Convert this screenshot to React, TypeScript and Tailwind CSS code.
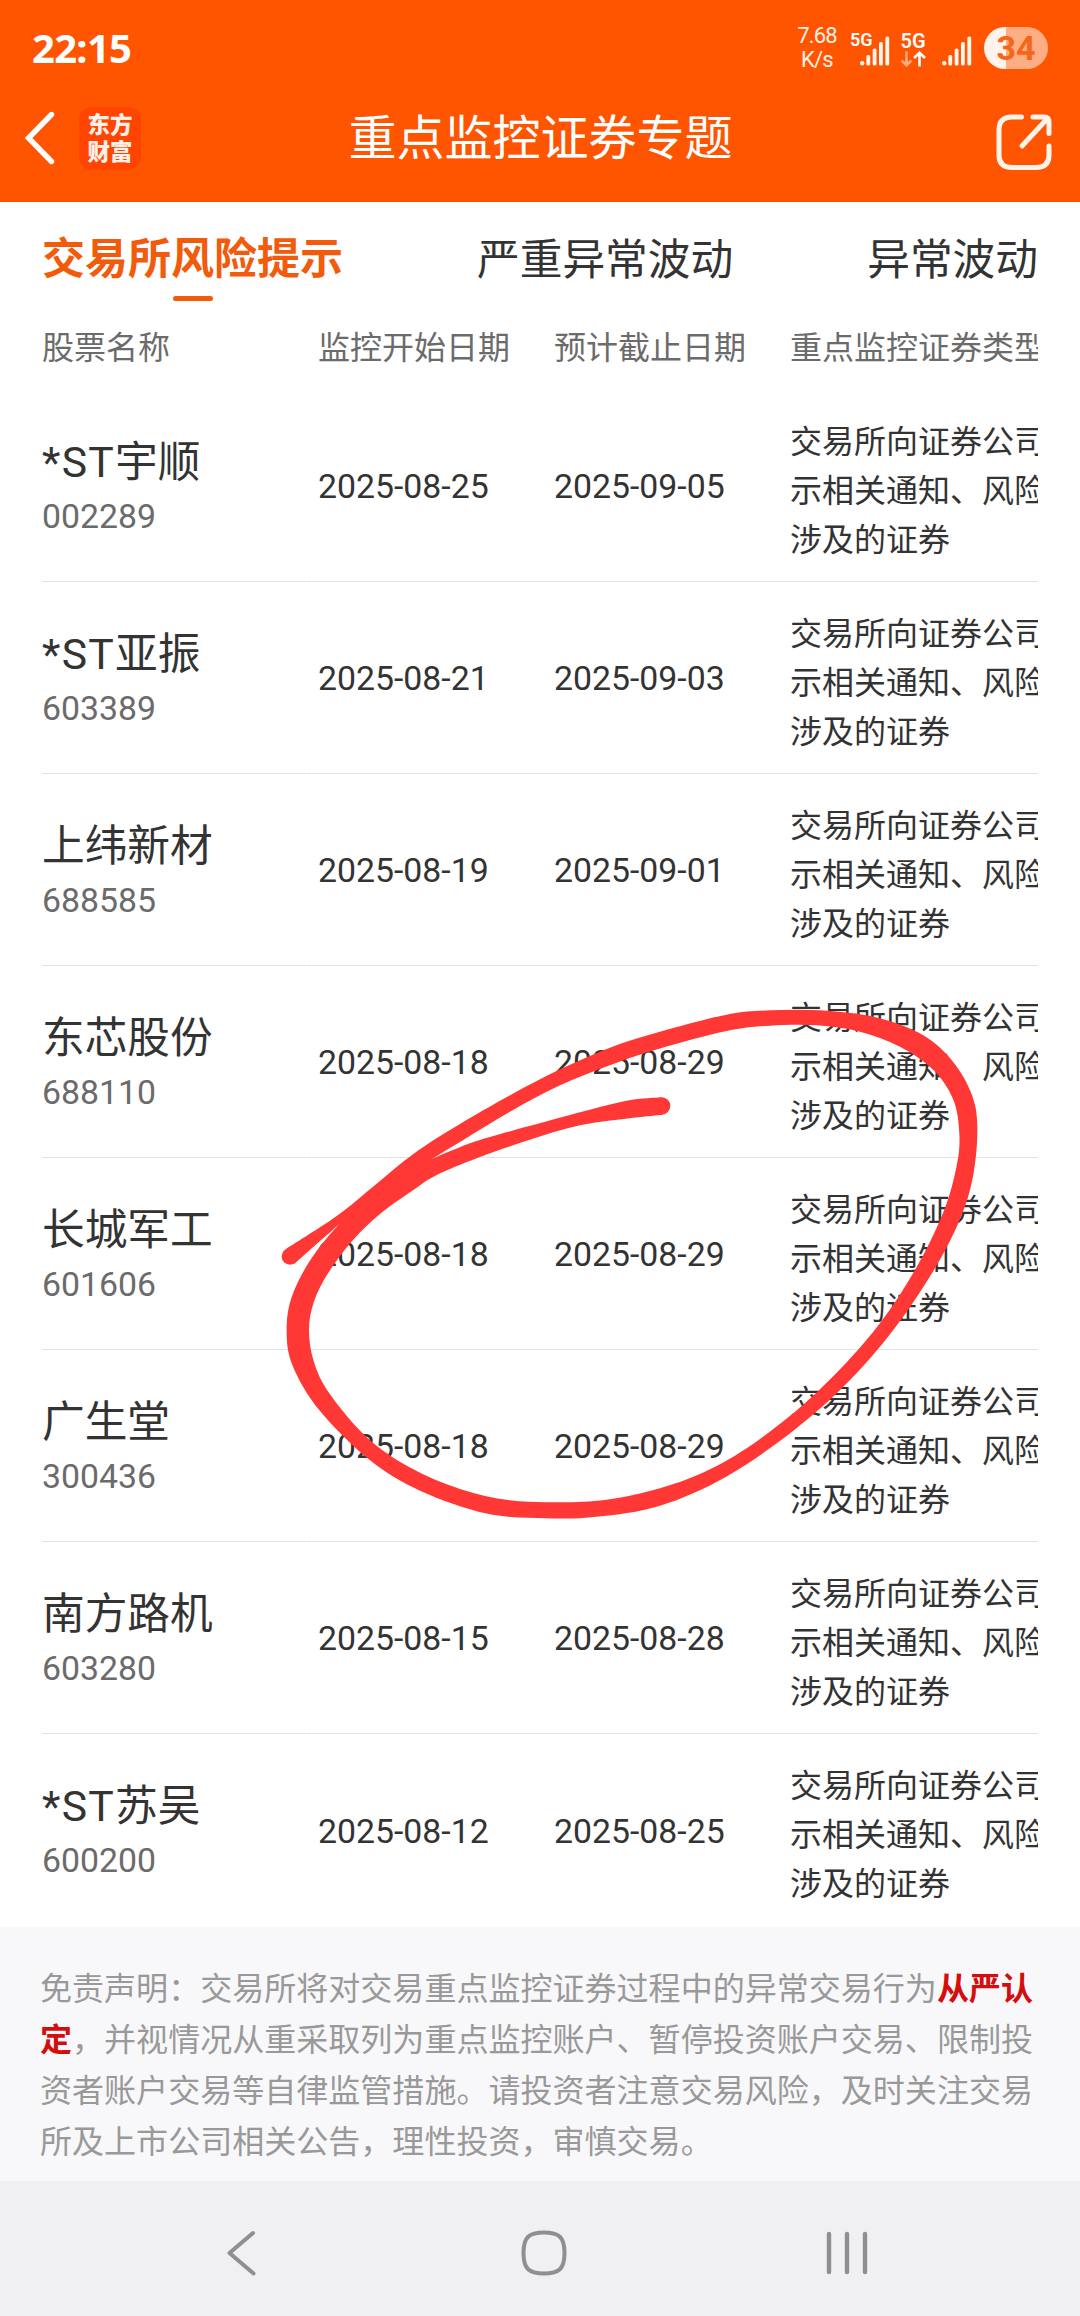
import React from "react";

const stocks = [
  { prefix: "*ST", name: "宇顺", code: "002289", start: "2025-08-25", end: "2025-09-05" },
  { prefix: "*ST", name: "亚振", code: "603389", start: "2025-08-21", end: "2025-09-03" },
  { prefix: "", name: "上纬新材", code: "688585", start: "2025-08-19", end: "2025-09-01" },
  { prefix: "", name: "东芯股份", code: "688110", start: "2025-08-18", end: "2025-08-29" },
  { prefix: "", name: "长城军工", code: "601606", start: "2025-08-18", end: "2025-08-29" },
  { prefix: "", name: "广生堂", code: "300436", start: "2025-08-18", end: "2025-08-29" },
  { prefix: "", name: "南方路机", code: "603280", start: "2025-08-15", end: "2025-08-28" },
  { prefix: "*ST", name: "苏吴", code: "600200", start: "2025-08-12", end: "2025-08-25" },
];

type Point = [number, number];

// the two edges of the hand-drawn loop, from the thick end to the thin tail
const outerEdge: Point[] = [
  [1205, 328], [1100, 338], [930, 378], [700, 437], [600, 468], [490, 513],
  [380, 575], [270, 653], [165, 765], [98, 880], [80, 980], [98, 1080],
  [180, 1207], [330, 1345], [480, 1430], [680, 1494], [860, 1507],
  [1010, 1503], [1200, 1472], [1400, 1390], [1600, 1262], [1760, 1130],
  [1900, 980], [2020, 815], [2100, 670], [2140, 545], [2152, 410],
  [2135, 320], [2080, 230], [1990, 155], [1850, 105], [1680, 85],
  [1530, 85], [1400, 97], [1200, 145], [1050, 190], [840, 278],
  [600, 403], [460, 487], [340, 578], [230, 661], [80, 752],
];

const innerEdge: Point[] = [
  [1208, 377], [1120, 386], [960, 407], [800, 450], [650, 499], [530, 546],
  [460, 588], [360, 655], [275, 732], [205, 820], [162, 900], [147, 980],
  [162, 1070], [210, 1160], [320, 1280], [450, 1365], [600, 1425],
  [750, 1457], [900, 1462], [1040, 1455], [1200, 1423], [1350, 1370],
  [1500, 1285], [1670, 1155], [1840, 985], [1960, 820], [2050, 650],
  [2090, 520], [2098, 430], [2080, 335], [2020, 252], [1920, 187],
  [1800, 145], [1670, 127], [1530, 128], [1400, 143], [1200, 192],
  [1060, 235], [900, 295], [750, 369], [610, 448], [490, 518],
  [390, 600], [265, 664], [200, 715], [103, 795],
];

function curve(points: Point[]) {
  let d = "";
  for (let i = 0; i < points.length - 1; i++) {
    const p0 = points[i - 1] || points[i];
    const p1 = points[i];
    const p2 = points[i + 1];
    const p3 = points[i + 2] || p2;
    d += `C${p1[0] + (p2[0] - p0[0]) / 6} ${p1[1] + (p2[1] - p0[1]) / 6} `;
    d += `${p2[0] - (p3[0] - p1[0]) / 6} ${p2[1] - (p3[1] - p1[1]) / 6} `;
    d += `${p2[0]} ${p2[1]}`;
  }
  return d;
}

function Loop() {
  const back = [...innerEdge].reverse();
  return (
    <svg
      className="absolute left-[260px] top-[980px] w-[820px] h-[560px] pointer-events-none"
      viewBox="0 0 2460 1568"
      preserveAspectRatio="none"
      fill="#ff3735"
    >
      <path
        d={`M${outerEdge[0].join(" ")}${curve(outerEdge)}L${back[0].join(" ")}${curve(back)}Z`}
      />
      {/* where the two strands run over each other */}
      <path d="M490 513L380 565L270 653L380 640Z" />
      <ellipse cx="1205" cy="352.5" rx="26" ry="24.5" />
      <ellipse cx="90" cy="774" rx="25" ry="23.5" />
    </svg>
  );
}

function Signal() {
  return (
    <svg width="30" height="30" viewBox="0 0 30 30" fill="#fff6ee">
      <circle cx="2.2" cy="27.3" r="2.2" />
      <rect x="6.4" y="19" width="3.8" height="10.5" rx="1.6" />
      <rect x="12.7" y="12.6" width="3.8" height="16.9" rx="1.6" />
      <rect x="19" y="6" width="3.8" height="23.5" rx="1.6" />
      <rect x="25.4" y="0.4" width="3.8" height="29.1" rx="1.6" />
    </svg>
  );
}

function StatusBar() {
  return (
    <div className="h-[96px] pl-[32px] pr-8 flex flex-row justify-between items-center text-white">
      <div className="-mt-px font-['Noto_Sans'] font-bold text-[40px] leading-[40px] tracking-[-0.7px]">
        22:15
      </div>
      <div className="flex flex-row items-center">
        <div className="w-[42px] text-center font-['Roboto'] text-[22px] leading-[24px] tracking-[-0.8px] text-[#fff0e6]">
          <div>7.68</div>
          <div>K/s</div>
        </div>
        <div className="relative ml-[22px] w-[30px] h-[30px] top-[3px]">
          <div className="absolute left-[-10px] top-[-5px] font-['Roboto'] font-semibold text-[18px] leading-[18px]">
            5G
          </div>
          <Signal />
        </div>
        <div className="ml-[10px] mt-[2px] w-[26px] flex flex-col items-center">
          <div className="font-['Roboto'] font-semibold text-[20px] leading-[19px]">
            5G
          </div>
          <svg width="26" height="16" viewBox="0 0 26 16" fill="none" stroke="#fff" strokeWidth="2.6">
            <path d="M6.5 0.5V14M1.5 9.5L6.5 14.3L11.5 9.5" opacity="0.5" />
            <path d="M19.5 15.5V2M14 7L19.5 1.8L25 7" />
          </svg>
        </div>
        <div className="relative ml-[16px] top-[3px]">
          <Signal />
        </div>
        <div className="ml-[12px] w-[64px] h-[42px] rounded-full bg-[linear-gradient(to_right,#fff3ec_22px,#ffae84_22px)] flex justify-center items-center font-['Roboto'] font-bold text-[34px] leading-none text-[#f4671b]">
          34
        </div>
      </div>
    </div>
  );
}

function TitleBar() {
  return (
    <div className="h-[106px] pl-[24px] pr-[27px] flex flex-row justify-between items-center pb-[21px]">
      <div className="w-[160px] flex flex-row items-center">
        <svg className="-mt-px" width="31" height="54" viewBox="0 0 31 54" fill="none" stroke="#fff" strokeWidth="5.4" strokeLinecap="round">
          <path d="M27.5 3.5L4.5 27L27.5 50.5" />
        </svg>
        <div className="ml-[24px] w-[62px] h-[63px] rounded-[13px] bg-[#ff4501] text-[#fff1e8] font-black text-[22.5px] leading-[27px] flex flex-col justify-center items-center">
          <div>东方</div>
          <div>财富</div>
        </div>
      </div>
      <div className="pl-[4px] text-white text-[48px] leading-[56px]">重点监控证券专题</div>
      <div className="w-[160px] flex justify-end">
        <svg className="mt-[6px]" width="58" height="58" viewBox="0 0 58 58" fill="none" stroke="#fff3ea" strokeWidth="5" strokeLinecap="round" strokeLinejoin="round">
          <path d="M26.5 4H17Q4 4 4 17V42Q4 54.5 17 54.5H41Q54 54.5 54 42V33" />
          <path d="M38 4H49Q54 4 54 9V20.500M52 6L27 33" />
        </svg>
      </div>
    </div>
  );
}

function Tabs() {
  return (
    <div className="h-[106px] pl-[42px] pr-[42px] pt-[28px] flex flex-row justify-between text-[42.7px] leading-[60px] text-[#333]">
      <div className="flex flex-col items-center font-bold text-[#f25b0b]">
        <div className="-mt-px text-[43px]">交易所风险提示</div>
        <div className="mt-[7px] w-[40px] h-[5px] rounded-full bg-[#f25b0b]"></div>
      </div>
      <div>严重异常波动</div>
      <div>异常波动</div>
    </div>
  );
}

function StockTable() {
  return (
    <div className="mx-[42px] overflow-hidden whitespace-nowrap text-[32px] text-[#333]">
      <div className="h-[82px] pt-[16px] flex flex-row leading-[48px] text-[#6b6b6b]">
        <div className="w-[276px] shrink-0">股票名称</div>
        <div className="w-[236px] shrink-0">监控开始日期</div>
        <div className="w-[236px] shrink-0">预计截止日期</div>
        <div>重点监控证券类型</div>
      </div>
      {stocks.map((stock, index) => {
        const line = index < stocks.length - 1 ? "border-b border-[#e2e2e2]" : "";
        return (
          <div key={stock.code} className="h-[192px] flex flex-row gap-px">
            <div className={`w-[264px] shrink-0 pt-[43px] ${line}`}>
              <div className="text-[42.7px] leading-[58px]">
                <span className="tracking-[1.3px]">{stock.prefix}</span>
                {stock.name}
              </div>
              <div className="text-[33.8px] leading-[52px] text-[#6b6b6b]">{stock.code}</div>
            </div>
            <div className={`flex-1 min-w-0 pl-[11px] flex flex-row items-center ${line}`}>
              <div className="w-[236px] shrink-0 pt-[4px] text-[33.8px]">{stock.start}</div>
              <div className="w-[236px] shrink-0 pt-[4px] text-[33.8px]">{stock.end}</div>
              <div className="pt-[11px] leading-[49px]">
                <div>交易所向证券公司提</div>
                <div>示相关通知、风险提</div>
                <div>涉及的证券</div>
              </div>
            </div>
          </div>
        );
      })}
    </div>
  );
}

function Disclaimer() {
  return (
    <div className="mt-px h-[254px] px-10 pt-[37px] bg-[#f8f8fa] whitespace-nowrap text-[32.04px] leading-[51px] text-[#999]">
      免责声明：交易所将对交易重点监控证券过程中的异常交易行为
      <b className="text-[#d40d0d]">从严认</b>
      <br />
      <b className="text-[#d40d0d]">定</b>
      ，并视情况从重采取列为重点监控账户、暂停投资账户交易、限制投
      <br />
      资者账户交易等自律监管措施。请投资者注意交易风险，及时关注交易
      <br />
      所及上市公司相关公告，理性投资，审慎交易。
    </div>
  );
}

function NavBar() {
  return (
    <div className="h-[135px] pl-[226px] pr-[228px] pt-[48px] flex flex-row justify-between items-start bg-[#f0f0f2]">
      <svg width="31" height="48" viewBox="0 0 31 48" fill="none" stroke="#8f8f8f" strokeWidth="4" strokeLinecap="round" strokeLinejoin="round">
        <path d="M27 4L3.500 24L27.500 44.500" />
      </svg>
      <svg className="ml-[7px]" width="48" height="48" viewBox="0 0 48 48" fill="none" stroke="#8f8f8f" strokeWidth="4">
        <path d="M24 3.500C39 3.500 44.500 8 44.500 24S39 44.500 24 44.500S3.500 40 3.500 24S9 3.500 24 3.500Z" />
      </svg>
      <svg className="mr-[-16px]" width="44" height="48" viewBox="0 0 44 48" stroke="#8f8f8f" strokeWidth="4.4" strokeLinecap="round">
        <path d="M5 5V43M23 5V43M41 5V43" />
      </svg>
    </div>
  );
}

function App() {
  return (
    <div className="relative w-[1080px] h-[2316px] overflow-hidden bg-white font-['Roboto','Noto_Sans_CJK_SC',sans-serif]">
      <div className="bg-[#ff5500]">
        <StatusBar />
        <TitleBar />
      </div>
      <Tabs />
      <StockTable />
      <Disclaimer />
      <NavBar />
      <Loop />
    </div>
  );
}

export default App;
